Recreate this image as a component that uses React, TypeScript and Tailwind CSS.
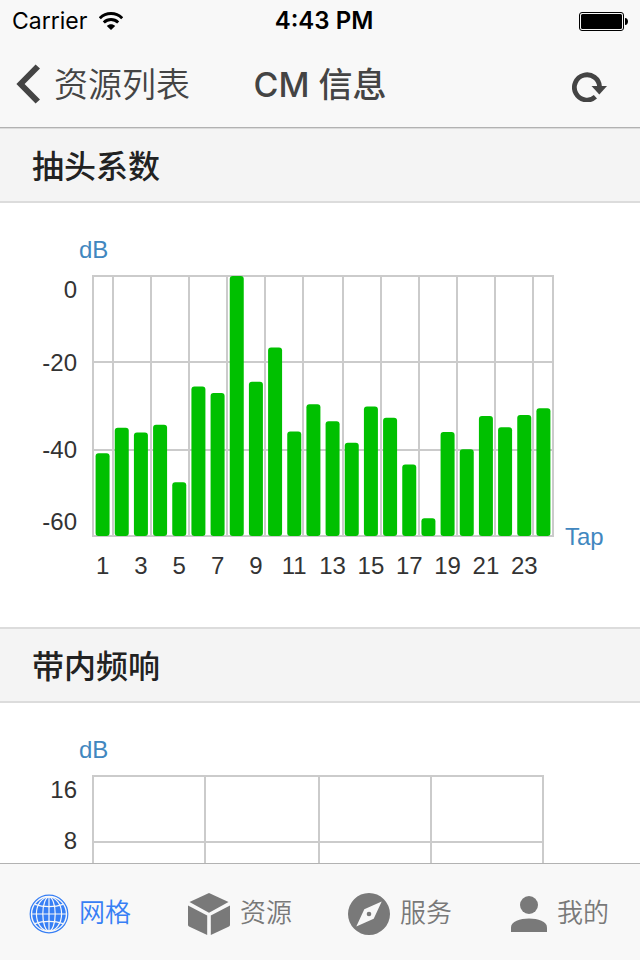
import type { ReactNode } from 'react'

const TAPS = [
  -40.9, -35, -36.1, -34.3, -47.6, -25.5, -27, 0, -24.4, -16.5, -35.9, -29.6,
  -33.5, -38.5, -30.1, -32.7, -43.5, -55.9, -36, -40, -32.3, -34.9, -32.1, -30.5,
]

const LEFT = 93
const TOP = 73

// one slot per tap, 24 slots over 460 units
const SLOT = 460 / 24
const BAR = 14
const DB = 260 / 60

const TAP_LINES = [113, 151, 189, 227, 265, 303, 343, 381, 419, 457, 495, 533]

const TapChart = () => (
  <svg viewBox="0 0 640 424" className="block w-full text-2xl" role="img" aria-label="抽头系数">
    <g className="fill-none stroke-[#cbcbcb] stroke-2">
      <rect x={LEFT} y={TOP} width={460} height={260} />
      <path d="M93 159H553M93 247H553" />
      {TAP_LINES.map((x) => (
        <path key={x} d={`M${x} 73V333`} />
      ))}
    </g>
    <g className="fill-[#00c000]">
      {TAPS.map((value, i) => (
        <rect
          key={i}
          x={LEFT + SLOT * i + (SLOT - BAR) / 2}
          y={TOP - value * DB}
          width={BAR}
          height={(60 + value) * DB}
          rx={3}
        />
      ))}
    </g>
    <g className="fill-[#333]" textAnchor="end">
      <text x={77} y={95}>0</text>
      <text x={77} y={168}>-20</text>
      <text x={77} y={255}>-40</text>
      <text x={77} y={327}>-60</text>
    </g>
    <g className="fill-[#333]" textAnchor="middle">
      {TAPS.map((_, i) =>
        i % 2 === 0 ? (
          <text key={i} x={LEFT + SLOT * (i + 0.5)} y={371}>
            {i + 1}
          </text>
        ) : null
      )}
    </g>
    <g className="fill-[#4187bf]">
      <text x={79} y={55}>dB</text>
      <text x={565} y={342}>Tap</text>
    </g>
  </svg>
)

const ResponseChart = () => (
  <svg viewBox="0 0 640 424" className="block w-full text-2xl" role="img" aria-label="带内频响">
    <g className="fill-none stroke-[#cbcbcb] stroke-2">
      <rect x={LEFT} y={TOP} width={450} height={264} />
      <path d="M93 139H543M93 205H543M93 271H543" />
      <path d="M205 73V337M319 73V337M431 73V337" />
    </g>
    <g className="fill-[#333]" textAnchor="end">
      <text x={77} y={95}>16</text>
      <text x={77} y={146}>8</text>
    </g>
    <text x={79} y={55} className="fill-[#4187bf]">dB</text>
  </svg>
)

const WifiIcon = () => (
  <svg viewBox="0 0 24 18" className="h-[18px] w-6" fill="none" stroke="#000" strokeWidth="3">
    <path d="M.8 6.2C7 0 17 0 23.2 6.2" />
    <path d="M4.8 10.5C9 6.6 15 6.6 19.2 10.5" />
    <path d="M12 18L7.8 14C10.2 11.8 13.8 11.8 16.2 14Z" fill="#000" stroke="none" />
  </svg>
)

const BatteryIcon = () => (
  <svg viewBox="0 0 49 19" className="h-[19px] w-[49px]">
    <rect x=".5" y=".5" width="44" height="18" rx="2.5" fill="none" stroke="#000" />
    <rect x="2" y="2" width="41" height="15" rx="1.5" />
    <path d="M46 6C50 6 50 13 46 13Z" />
  </svg>
)

const BackIcon = () => (
  <svg viewBox="0 0 24 40" className="h-10 w-6" fill="#444">
    <path d="M.4 20L19.6 .4L24 4.6L8.6 20L24 35.4L19.6 39.6Z" />
  </svg>
)

const RefreshIcon = () => (
  <svg viewBox="0 0 36 30" className="h-[30px] w-9">
    <path d="M23.4 24.8A12.6 12.6 0 1 1 27.6 15" fill="none" stroke="#444" strokeWidth="4.8" />
    <path d="M19.5 14H35L27.3 22.6Z" fill="#444" />
  </svg>
)

const GlobeIcon = () => (
  <svg viewBox="0 0 40 40" className="size-10" fill="none" stroke="#f8f8f8" strokeWidth="1.2">
    <circle cx="20" cy="20" r="18.8" stroke="#377ff5" />
    <circle cx="20" cy="20" r="16.8" fill="#377ff5" stroke="none" />
    <path d="M20 3V37M3 20H37" />
    <ellipse cx="20" cy="20" rx="6.2" ry="17" />
    <ellipse cx="20" cy="20" rx="12.6" ry="17" />
    <path d="M6 10.4C14 13.4 26 13.4 34 10.4M6 29.6C14 26.6 26 26.6 34 29.6" />
  </svg>
)

const CubeIcon = () => (
  <svg viewBox="0 0 42 42" className="size-[42px]" fill="currentColor">
    <path d="M21 0L40.5 9L21 19.7L1.5 9Z" />
    <path d="M0 12.6L19.2 22.6V42L1 33.4Q0 32.9 0 32Z" />
    <path d="M42 12.6L22.8 22.6V42L41 33.4Q42 32.9 42 32Z" />
  </svg>
)

const CompassIcon = () => (
  <svg viewBox="0 0 42 42" className="size-[42px]" fill="currentColor">
    <path
      fillRule="evenodd"
      d="M21 0A21 21 0 1 1 21 42A21 21 0 1 1 21 0ZM33.7 8.5L16.3 16.3L8.3 33.6L25.7 25.7Z"
    />
    <circle cx="21" cy="21" r="2.3" />
  </svg>
)

const PersonIcon = () => (
  <svg viewBox="0 0 36 36" className="size-9" fill="currentColor">
    <circle cx="18" cy="9" r="9" />
    <path d="M0 36V31.5C0 25.6 9 22.6 18 22.6S36 25.6 36 31.5V36Z" />
  </svg>
)

const SectionTitle = ({ children }: { children: ReactNode }) => (
  <h2 className="border-y-2 border-[#dcdcdc] bg-[#f4f4f4] px-8 pt-1 text-[32px] leading-[68px] font-medium text-[#222]">
    {children}
  </h2>
)

const TABS = [
  { label: '网格', icon: <GlobeIcon />, active: true },
  { label: '资源', icon: <CubeIcon />, active: false },
  { label: '服务', icon: <CompassIcon />, active: false },
  { label: '我的', icon: <PersonIcon />, active: false },
]

function App() {
  return (
    <div className="flex h-screen flex-col bg-white font-['Liberation_Sans','Noto_Sans_CJK_SC',sans-serif]">
      <header className="relative z-10 border-b border-[#b2b2b2] bg-[#f8f8f8] font-['Inter','Noto_Sans_CJK_SC',sans-serif]">
        <div className="grid h-10 grid-cols-[1fr_auto_1fr] items-center pt-0.5 pr-1 pl-3 text-2xl text-black">
          <div className="flex items-center gap-3">
            <span className="text-[23px]">Carrier</span>
            <WifiIcon />
          </div>
          <span className="font-semibold">4:43 PM</span>
          <div className="flex justify-end pr-2">
            <BatteryIcon />
          </div>
        </div>
        <nav className="grid h-[87px] grid-cols-[1fr_auto_1fr] items-center px-4 text-[34px] text-[#444]">
          <button className="flex items-center gap-3.5 text-left font-[350]">
            <BackIcon />
            <span className="pt-0.5">资源列表</span>
          </button>
          <h1 className="pt-0.5 font-medium">CM 信息</h1>
          <button className="mt-1.5 mr-4 justify-self-end" aria-label="刷新">
            <RefreshIcon />
          </button>
        </nav>
      </header>

      <main className="-mt-px min-h-0 flex-1 overflow-y-auto [scrollbar-width:none]">
        <section>
          <SectionTitle>抽头系数</SectionTitle>
          <TapChart />
        </section>
        <section>
          <SectionTitle>带内频响</SectionTitle>
          <ResponseChart />
        </section>
      </main>

      <footer className="flex h-[97px] border-t border-[#b2b2b2] bg-[#f8f8f8]">
        {TABS.map((tab) => (
          <a
            key={tab.label}
            href="#"
            className={
              tab.active
                ? 'flex flex-1 items-center justify-center gap-2.5 text-[26px] font-[350] text-[#377ff5]'
                : 'flex flex-1 items-center justify-center gap-2.5 text-[26px] font-[350] text-[#797979]'
            }
          >
            <span className="mt-1">{tab.icon}</span>
            <span className="pt-0.5">{tab.label}</span>
          </a>
        ))}
      </footer>
    </div>
  )
}

export default App
